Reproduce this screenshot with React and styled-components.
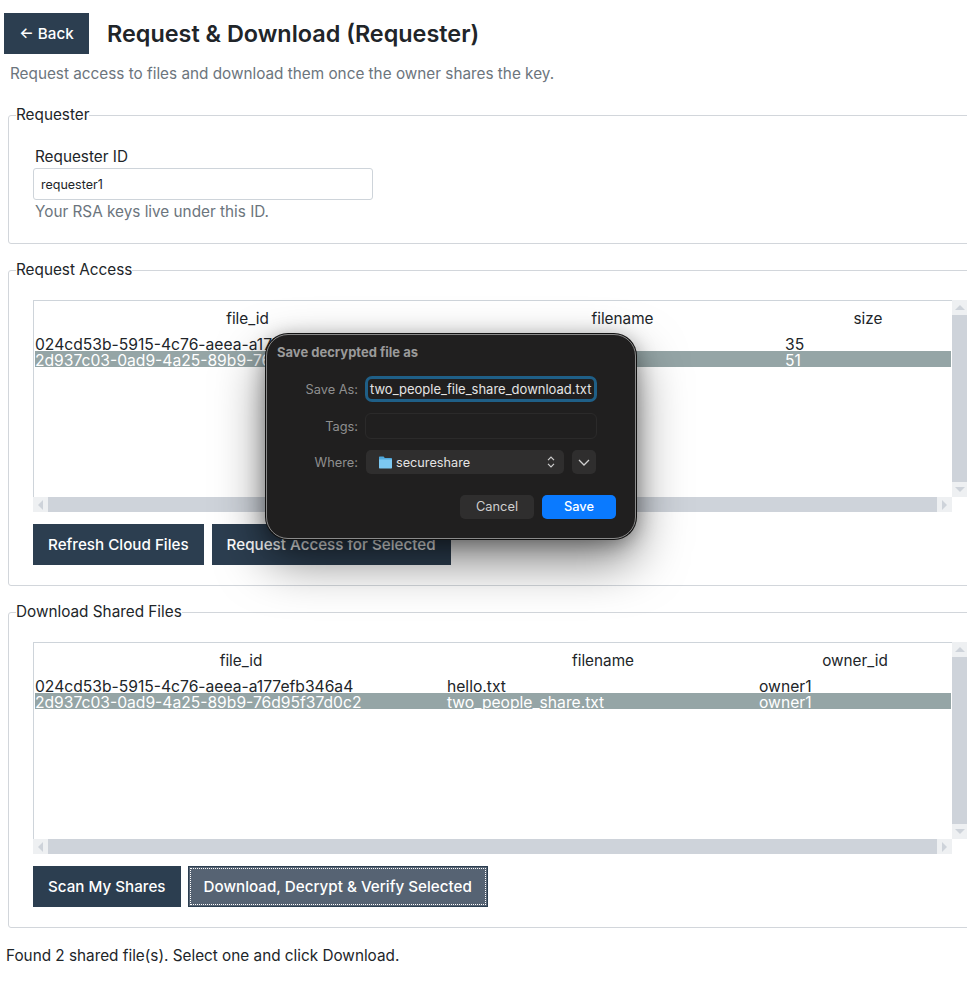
import React from 'react'
import styled, { createGlobalStyle } from 'styled-components'

const GlobalStyle = createGlobalStyle`
  html, body {
    margin: 0;
    padding: 0;
    background: #fff;
    overflow: hidden;
  }
  body {
    font-family: Inter, "Liberation Sans", sans-serif;
    font-size: 15.3px;
    color: #212529;
  }
`

const Page = styled.div`
  position: relative;
  width: 967px;
  height: 984px;
  overflow: hidden;
`

const Header = styled.header`
  display: flex;
  align-items: center;
  gap: 18px;
  padding: 13px 0 0 4px;
  h1 {
    margin: 0;
    font-size: 23.4px;
    line-height: 41px;
    font-weight: 600;
  }
`

const Button = styled.button`
  height: 41px;
  padding: 0 15px;
  border: 0;
  border-radius: 0;
  background: #2c3e50;
  color: #fff;
  font: 500 15.2px Inter, sans-serif;
  white-space: nowrap;
`

const BackButton = styled(Button)`
  width: 85px;
  padding: 0;
`

const ActiveButton = styled(Button)`
  background: #566373;
  border: 1px solid #2c3e50;
  outline: 1px dotted #fff;
  outline-offset: -3px;
`

const Subtitle = styled.p`
  margin: 11px 0 0 10px;
  height: 18px;
  line-height: 18px;
  color: #6c757d;
`

const Group = styled.fieldset`
  box-sizing: border-box;
  width: 1000px;
  margin: ${p => p.$top}px 0 0 8px;
  padding: ${p => p.$padTop}px 0 ${p => p.$padBottom}px 24px;
  border: 1px solid #d2d6db;
  border-radius: 3px;
  min-inline-size: 0;
  legend {
    margin-left: -17px;
    padding: 0 0 2px;
    line-height: 19px;
  }
`

const Field = styled.div`
  display: flex;
  flex-direction: column;
  width: 340px;
  label {
    margin-left: 2px;
    line-height: 19px;
    padding-bottom: 2px;
  }
  input {
    box-sizing: border-box;
    width: 340px;
    height: 32px;
    padding: 0 7px;
    border: 1px solid #ced4da;
    border-radius: 3px;
    font: 12.5px Inter, sans-serif;
    color: #212529;
  }
  small {
    margin: 2px 0 0 2px;
    font-size: 15.3px;
    line-height: 19px;
    color: #6c757d;
  }
`

const ListArea = styled.div`
  display: grid;
  grid-template-columns: 919px 15px;
  grid-template-rows: 197px 15px;
  width: 934px;
`

const ListBox = styled.div`
  box-sizing: border-box;
  padding: 0 1px 0 1px;
  border-left: 1px solid #ced4da;
  border-top: 1px solid #ced4da;
  font-size: 15.65px;
`

const HeadRow = styled.div`
  display: grid;
  grid-template-columns: ${p => p.$cols};
  height: 34px;
  line-height: 36px;
  text-align: center;
  font-size: 15.3px;
`

const DataRow = styled.div`
  display: grid;
  grid-template-columns: ${p => p.$cols};
  height: 16px;
  line-height: 20px;
  white-space: nowrap;
  background: ${p => (p.$selected ? '#95a5a6' : 'transparent')};
  color: ${p => (p.$selected ? '#fff' : '#212529')};
`

const Scrollbar = styled.div`
  display: flex;
  flex-direction: ${p => (p.$vertical ? 'column' : 'row')};
  background: #ced3da;
`

const ScrollEnd = styled.div`
  flex: 0 0 15px;
  display: flex;
  align-items: center;
  justify-content: center;
  background: #eef0f2;
  margin-left: ${p => (p.$push ? 'auto' : '0')};
  margin-top: ${p => (p.$pushY ? 'auto' : '0')};
`

const Arrow = styled.i`
  width: 0;
  height: 0;
  border-style: solid;
  border-color: transparent;
  ${p => p.$dir === 'up' && 'border-width: 0 5px 5px; border-bottom-color: #ced3da;'}
  ${p => p.$dir === 'down' && 'border-width: 5px 5px 0; border-top-color: #ced3da;'}
  ${p => p.$dir === 'left' && 'border-width: 5px 5px 5px 0; border-right-color: #ced3da;'}
  ${p => p.$dir === 'right' && 'border-width: 5px 0 5px 5px; border-left-color: #ced3da;'}
`

const Actions = styled.div`
  display: flex;
  gap: ${p => p.$gap}px;
  margin-top: 12px;
`

const Status = styled.p`
  margin: 18px 0 0 6px;
  line-height: 19px;
`

/* native macOS save sheet lying over the page */
const Dialog = styled.div`
  position: absolute;
  left: 266px;
  top: 334px;
  box-sizing: border-box;
  width: 370px;
  height: 205px;
  padding: 10px 19px 0 10px;
  background: #201f1f;
  border: 1px solid #8a8a8a;
  border-radius: 22px;
  box-shadow: 0 0 0 1px #111, 0 22px 50px rgba(0, 0, 0, 0.5), 0 4px 20px rgba(0, 0, 0, 0.35);
  font-size: 13px;
  color: #e4e4e4;
`

const DialogTitle = styled.div`
  font-size: 13px;
  line-height: 14px;
  font-weight: 700;
  color: #9a9a9a;
`

const DialogGrid = styled.div`
  display: grid;
  grid-template-columns: 81px 232px;
  column-gap: 7px;
  row-gap: 11px;
  align-items: center;
  margin-top: 17px;
`

const DialogLabel = styled.span`
  text-align: right;
  font-size: 12.8px;
  color: #8f8f8f;
`

const NameInput = styled.div`
  box-sizing: border-box;
  height: 26px;
  line-height: 20px;
  padding-left: 2px;
  border: 3px solid #1f5f87;
  border-radius: 7px;
  white-space: nowrap;
`

const TagsInput = styled.div`
  height: 26px;
  box-sizing: border-box;
  border: 1px solid #2b2a2a;
  border-radius: 6px;
`

const WhereRow = styled.div`
  display: flex;
  gap: 8px;
  padding-left: 1px;
`

const Select = styled.div`
  box-sizing: border-box;
  display: flex;
  align-items: center;
  width: 198px;
  height: 24px;
  padding: 0 9px 0 12px;
  gap: 3px;
  background: #2f2e2e;
  border-radius: 5px;
  font-size: 12.7px;
  span {
    flex: 1;
  }
`

const SquareButton = styled.div`
  display: flex;
  align-items: center;
  justify-content: center;
  width: 24px;
  height: 24px;
  background: #2f2e2e;
  border-radius: 5px;
`

const DialogActions = styled.div`
  display: flex;
  justify-content: flex-end;
  gap: 8px;
  margin-top: 21px;
`

const SheetButton = styled.div`
  width: 74px;
  height: 24px;
  line-height: 24px;
  text-align: center;
  border-radius: 5px;
  font-size: 12.8px;
  background: ${p => (p.$primary ? '#0a7aff' : '#2f2e2e')};
  color: ${p => (p.$primary ? '#fff' : '#cfcfcf')};
  font-weight: ${p => (p.$primary ? 500 : 400)};
`

const cloudCols = '425px 325px 166px'
const shareCols = '412px 312px 192px'

function FileList({ cols, heads, rows, selected }) {
  return (
    <ListArea>
      <ListBox>
        <HeadRow $cols={cols}>
          {heads.map(h => <span key={h}>{h}</span>)}
        </HeadRow>
        {rows.map((row, i) => (
          <DataRow key={row[0]} $cols={cols} $selected={i === selected}>
            {row.map(cell => <span key={cell}>{cell}</span>)}
          </DataRow>
        ))}
      </ListBox>
      <Scrollbar $vertical>
        <ScrollEnd><Arrow $dir="up" /></ScrollEnd>
        <ScrollEnd $pushY><Arrow $dir="down" /></ScrollEnd>
      </Scrollbar>
      <Scrollbar>
        <ScrollEnd><Arrow $dir="left" /></ScrollEnd>
        <ScrollEnd $push><Arrow $dir="right" /></ScrollEnd>
      </Scrollbar>
    </ListArea>
  )
}

function SaveDialog() {
  return (
    <Dialog>
      <DialogTitle>Save decrypted file as</DialogTitle>
      <DialogGrid>
        <DialogLabel>Save As:</DialogLabel>
        <NameInput>two_people_file_share_download.txt</NameInput>
        <DialogLabel>Tags:</DialogLabel>
        <TagsInput />
        <DialogLabel>Where:</DialogLabel>
        <WhereRow>
          <Select>
            <svg width="15" height="13" viewBox="0 0 15 13">
              <path d="M1 1.5C1 .9 1.4.5 2 .5h3.6l1.2 1.4H13c.6 0 1 .4 1 1V4H1z" fill="#4fa8dc" />
              <path d="M1 3.6h13v8c0 .6-.4 1-1 1H2c-.6 0-1-.4-1-1z" fill="#7cc8f2" />
            </svg>
            <span>secureshare</span>
            <svg width="8" height="12" viewBox="0 0 8 12" fill="none" stroke="#cfcfcf" strokeWidth="1.2">
              <path d="M1 4.2 4 1.2l3 3M1 7.8l3 3 3-3" />
            </svg>
          </Select>
          <SquareButton>
            <svg width="12" height="7" viewBox="0 0 12 7" fill="none" stroke="#cfcfcf" strokeWidth="1.3">
              <path d="M1 1l5 5 5-5" />
            </svg>
          </SquareButton>
        </WhereRow>
      </DialogGrid>
      <DialogActions>
        <SheetButton>Cancel</SheetButton>
        <SheetButton $primary>Save</SheetButton>
      </DialogActions>
    </Dialog>
  )
}

export default function App() {
  return (
    <Page>
      <GlobalStyle />
      <Header>
        <BackButton>← Back</BackButton>
        <h1>Request &amp; Download (Requester)</h1>
      </Header>
      <Subtitle>Request access to files and download them once the owner shares the key.</Subtitle>

      <Group $top={22} $padTop={21} $padBottom={22}>
        <legend>Requester</legend>
        <Field>
          <label>Requester ID</label>
          <input defaultValue="requester1" />
          <small>Your RSA keys live under this ID.</small>
        </Field>
      </Group>

      <Group $top={16} $padTop={19} $padBottom={20}>
        <legend>Request Access</legend>
        <FileList
          cols={cloudCols}
          heads={['file_id', 'filename', 'size']}
          selected={1}
          rows={[
            ['024cd53b-5915-4c76-aeea-a177efb346a4', 'hello.txt', '35'],
            ['2d937c03-0ad9-4a25-89b9-76d95f37d0c2', 'two_people_share.txt', '51'],
          ]}
        />
        <Actions $gap={8}>
          <Button>Refresh Cloud Files</Button>
          <Button>Request Access for Selected</Button>
        </Actions>
      </Group>

      <Group $top={16} $padTop={19} $padBottom={20}>
        <legend>Download Shared Files</legend>
        <FileList
          cols={shareCols}
          heads={['file_id', 'filename', 'owner_id']}
          selected={1}
          rows={[
            ['024cd53b-5915-4c76-aeea-a177efb346a4', 'hello.txt', 'owner1'],
            ['2d937c03-0ad9-4a25-89b9-76d95f37d0c2', 'two_people_share.txt', 'owner1'],
          ]}
        />
        <Actions $gap={7}>
          <Button>Scan My Shares</Button>
          <ActiveButton>Download, Decrypt &amp; Verify Selected</ActiveButton>
        </Actions>
      </Group>

      <Status>Found 2 shared file(s). Select one and click Download.</Status>
      <SaveDialog />
    </Page>
  )
}
